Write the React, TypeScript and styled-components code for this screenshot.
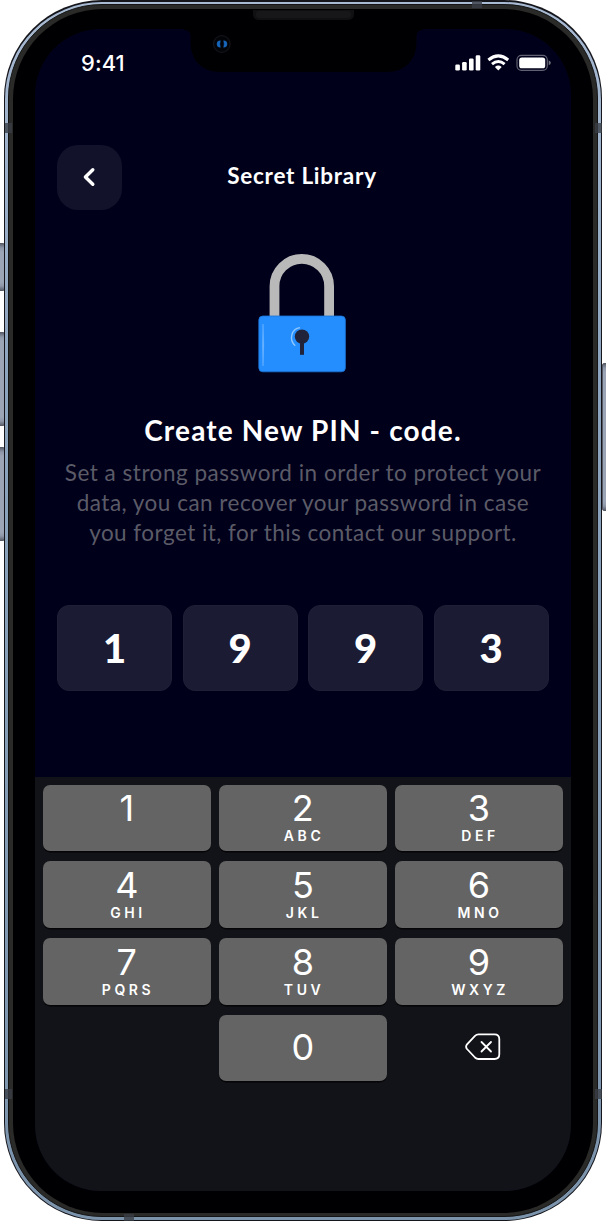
import React from 'react';
import styled, { createGlobalStyle } from 'styled-components';

const GlobalStyle = createGlobalStyle`
  * { box-sizing: border-box; }
  body { margin: 0; background: #fff; overflow: hidden; }
`;

const Stage = styled.main`
  position: relative;
  width: 606px;
  height: 1224px;
  padding: 0.4px 4.3px 0;
  overflow: hidden;
`;

const Shell = styled.div`
  position: relative;
  width: 597.4px;
  height: 1220.6px;
  padding: 1.2px;
  border-radius: 98px;
  background: #15161c;
`;

const Rim = styled.div`
  height: 100%;
  padding: 2.8px;
  border-radius: 97px;
  background: linear-gradient(#a9bbd3, #8ea5bf 30%, #7c93ac);
`;

const InnerRim = styled.div`
  height: 100%;
  padding: 3.3px;
  border-radius: 94px;
  background: #2a2a29;
  border: 1px solid #141414;
`;

const Bezel = styled.div`
  height: 100%;
  padding: 20.8px 22.7px 22px;
  border-radius: 90px;
  background: #000003;
`;

const Screen = styled.div`
  height: 100%;
  display: flex;
  flex-direction: column;
  border-radius: 66px;
  overflow: hidden;
  background: #00001b;
  color: #fff;
  font-family: Lato, sans-serif;
`;

const SideButton = styled.div<{ $top: number; $height: number; $right?: boolean }>`
  position: absolute;
  top: ${(p) => p.$top}px;
  ${(p) => (p.$right ? 'left: 601.5px;' : 'left: -2px;')}
  width: 6.8px;
  height: ${(p) => p.$height}px;
  border-radius: 2px;
  border: 1px solid #555a66;
  background: linear-gradient(#5e6470 0, #8e97a8 4px, #9ba5b6 8px, #9ba5b6 calc(100% - 8px), #8e97a8 calc(100% - 4px), #5e6470 100%);
`;

const AntennaBand = styled.div<{ $x: number; $y: number; $horizontal?: boolean }>`
  position: absolute;
  left: ${(p) => p.$x}px;
  top: ${(p) => p.$y}px;
  width: ${(p) => (p.$horizontal ? 10 : 7)}px;
  height: ${(p) => (p.$horizontal ? 7 : 10)}px;
  background: rgba(58, 62, 70, 0.8);
`;

const NotchArt = styled.svg`
  position: absolute;
  left: 184px;
  top: 8px;
`;

const StatusBar = styled.div`
  height: 66px;
  padding: 20.5px 20px 0 45.8px;
  display: flex;
  justify-content: space-between;
  align-items: flex-start;
`;

const Clock = styled.time`
  font: 500 21.9px/26px Inter, sans-serif;
  letter-spacing: 0.1px;
`;

const StatusIcons = styled.svg`
  display: block;
  margin-top: 3.5px;
`;

const Header = styled.header`
  margin-top: 49.5px;
  padding: 0 22px;
  display: grid;
  grid-template-columns: 65px 1fr 65px;
  align-items: center;
`;

const BackButton = styled.button`
  width: 65px;
  height: 65px;
  padding: 0 1.5px 0 0;
  border: 0;
  border-radius: 21px;
  display: grid;
  place-items: center;
  background: #12132b;
`;

const PageTitle = styled.h1`
  margin: 0 2px 3px 0;
  text-align: center;
  white-space: nowrap;
  font-size: 22.5px;
  line-height: 28px;
  font-weight: 700;
  letter-spacing: 0.75px;
`;

const Lock = styled.svg`
  display: block;
  margin: 43px 0 0 222px;
  flex: none;
`;

const Intro = styled.section`
  margin-top: 36.7px;
  text-align: center;
`;

const Heading = styled.h2`
  margin: 0;
  font-size: 28px;
  line-height: 40px;
  font-weight: 700;
  letter-spacing: 1.15px;
`;

const Description = styled.p`
  margin: 8px 0 0;
  color: #5b5b67;
`;

const Line = styled.span<{ $spacing: number }>`
  display: block;
  white-space: nowrap;
  font-size: 22.5px;
  line-height: 30.2px;
  letter-spacing: ${(p) => p.$spacing}px;
`;

const PinRow = styled.div`
  margin-top: 56.7px;
  padding: 0 22.2px 0 22px;
  display: grid;
  grid-template-columns: repeat(4, 1fr);
  gap: 10.8px;
`;

const PinCell = styled.div`
  height: 86px;
  border-radius: 12px;
  background: #1b1b34;
  border: 1px solid #1f1f36;
  display: grid;
  place-items: center;
  font-size: 40px;
  line-height: 48px;
  font-weight: 900;
`;

const Keyboard = styled.div`
  margin-top: auto;
  height: 414px;
  flex: none;
  padding: 8px 8px 0 7.7px;
  background: #121318;
  display: grid;
  grid-template-columns: repeat(3, 1fr);
  grid-auto-rows: 66.4px;
  gap: 10.4px 8.4px;
`;

const Key = styled.button`
  padding: 3.5px 0 0;
  border: 0;
  border-radius: 7px;
  background: #646464;
  box-shadow: 0 1.4px 0 #050507;
  color: #fff;
  display: flex;
  flex-direction: column;
  align-items: center;
  font-family: Inter, sans-serif;
`;

const Digit = styled.span<{ $alone?: boolean }>`
  font-size: 36px;
  line-height: 40px;
  font-weight: 400;
  margin-top: ${(p) => (p.$alone ? 8 : 0)}px;
`;

const Letters = styled.span`
  font-size: 14px;
  line-height: 16px;
  font-weight: 600;
  letter-spacing: 3.6px;
  margin-right: -2.5px;
`;

const DeleteKey = styled.button`
  padding: 0 0 2px 7.5px;
  border: 0;
  background: none;
  display: grid;
  place-items: center;
`;

const keys: [string, string][] = [
  ['1', ''], ['2', 'ABC'], ['3', 'DEF'],
  ['4', 'GHI'], ['5', 'JKL'], ['6', 'MNO'],
  ['7', 'PQRS'], ['8', 'TUV'], ['9', 'WXYZ'],
];

const Notch = () => (
  <NotchArt width="240" height="66" viewBox="184 8 240 66">
    <path d="M184 28V30Q190.500 30 190.500 36V42C190.500 60 202 72 220 72H387C405 72 416.500 60 416.500 42V36Q416.500 30 423 30V28Z" fill="#000003" />
    <path d="M253 10H354V14Q354 20 347 20H260Q253 20 253 14Z" fill="#101012" />
    <rect x="256" y="11" width="95" height="7" rx="3" fill="#17171a" />
    <circle cx="221.800" cy="44" r="8.300" fill="#030408" stroke="#121319" strokeWidth="1.300" />
    <path d="M220.300 40.700Q217 40.700 217 44T220.300 47.300Q219.300 44 220.300 40.700ZM223.700 40.700Q227 40.700 227 44T223.700 47.300Q224.700 44 223.700 40.700Z" fill="#1767bd" stroke="#1767bd" strokeWidth=".5" />
  </NotchArt>
);

const Signals = () => (
  <StatusIcons width="96" height="18" viewBox="0 0 96 18" fill="#fff">
    <rect x="0.300" y="11.500" width="4.600" height="6" rx="1.300" />
    <rect x="7.100" y="9" width="4.600" height="8.500" rx="1.300" />
    <rect x="14" y="5.500" width="4.600" height="12" rx="1.300" />
    <rect x="20.700" y="2.200" width="4.600" height="15.300" rx="1.300" />
    <g fill="none" stroke="#fff" strokeWidth="3">
      <path d="M33.400 7Q43.300 -1.200 53.200 7" />
      <path d="M37 11.100Q43.300 5.900 49.600 11.100" />
    </g>
    <path d="M39.900 13.900Q43.300 11.200 46.700 13.900L43.300 17.400Z" />
    <rect x="62" y="2.300" width="30.300" height="15" rx="4.500" fill="none" stroke="#fff" strokeOpacity=".38" strokeWidth="1.200" />
    <rect x="64.200" y="4.400" width="26" height="10.900" rx="2.600" />
    <path d="M93.700 7.300Q95.800 8.300 95.800 9.800T93.700 12.300Z" fillOpacity=".45" />
  </StatusIcons>
);

export default function App() {
  return (
    <>
      <GlobalStyle />
      <Stage>
        <SideButton $top={243} $height={48} />
        <SideButton $top={332} $height={94} />
        <SideButton $top={447} $height={94} />
        <SideButton $top={363} $height={148} $right />
        <Shell>
          <Rim>
            <InnerRim>
              <Bezel>
                <Screen>
                  <StatusBar>
                    <Clock>9:41</Clock>
                    <Signals />
                  </StatusBar>
                  <Header>
                    <BackButton aria-label="Back">
                      <svg width="14" height="20" viewBox="0 0 14 20" fill="none" stroke="#fff" strokeWidth="3.400" strokeLinecap="round" strokeLinejoin="round">
                        <path d="M10.800 2.800L3.400 10L10.800 17.200" />
                      </svg>
                    </BackButton>
                    <PageTitle>Secret Library</PageTitle>
                  </Header>
                  <Lock width="90" height="120" viewBox="0 0 90 120">
                    <path d="M17.500 64V33.200A27.300 27.300 0 0 1 72.100 33.200V64" fill="none" stroke="#b9b9b9" strokeWidth="9.800" />
                    <rect x="1.800" y="63" width="86.600" height="55.800" rx="4" fill="#248eff" stroke="#1c72d0" strokeWidth=".8" />
                    <path d="M6 71Q5.100 92 6 113Q7.400 92 6 71Z" fill="#84c1ff" stroke="#68b1ff" strokeWidth=".6" />
                    <path d="M43 74.600C34.500 75.500 31.500 86.500 38.200 92.800" fill="none" stroke="#8ec7ff" strokeWidth="1.400" />
                    <circle cx="45" cy="83.600" r="7.200" fill="#20233a" />
                    <rect x="43" y="87" width="4" height="14.800" fill="#20233a" />
                  </Lock>
                  <Intro>
                    <Heading>Create New PIN - code.</Heading>
                    <Description>
                      <Line $spacing={0.51}>Set a strong password in order to protect your</Line>
                      <Line $spacing={0.49}>data, you can recover your password in case</Line>
                      <Line $spacing={0.46}>you forget it, for this contact our support.</Line>
                    </Description>
                  </Intro>
                  <PinRow>
                    {['1', '9', '9', '3'].map((d, i) => <PinCell key={i}>{d}</PinCell>)}
                  </PinRow>
                  <Keyboard>
                    {keys.map(([digit, letters]) => (
                      <Key key={digit}>
                        <Digit>{digit}</Digit>
                        {letters && <Letters>{letters}</Letters>}
                      </Key>
                    ))}
                    <span />
                    <Key><Digit $alone>0</Digit></Key>
                    <DeleteKey aria-label="Delete">
                      <svg width="36" height="28" viewBox="0 0 36 28" fill="none" stroke="#fff" strokeWidth="1.800" strokeLinecap="round" strokeLinejoin="round">
                        <path d="M13.500 1.300H29.500Q34.300 1.300 34.300 6V21.300Q34.300 26 29.500 26H13.500Q11.500 26 10 24.500L2 16Q.2 13.700 2 11.400L10 2.800Q11.500 1.300 13.500 1.300Z" />
                        <path d="M16.500 9L26 18.500M26 9L16.500 18.500" />
                      </svg>
                    </DeleteKey>
                  </Keyboard>
                </Screen>
              </Bezel>
            </InnerRim>
          </Rim>
        </Shell>
        <Notch />
        <AntennaBand $x={4.6} $y={122.5} />
        <AntennaBand $x={594.8} $y={122.5} />
        <AntennaBand $x={4.6} $y={1089} />
        <AntennaBand $x={594.8} $y={1089} />
        <AntennaBand $x={472} $y={0.5} $horizontal />
        <AntennaBand $x={124} $y={1213.5} $horizontal />
      </Stage>
    </>
  );
}
